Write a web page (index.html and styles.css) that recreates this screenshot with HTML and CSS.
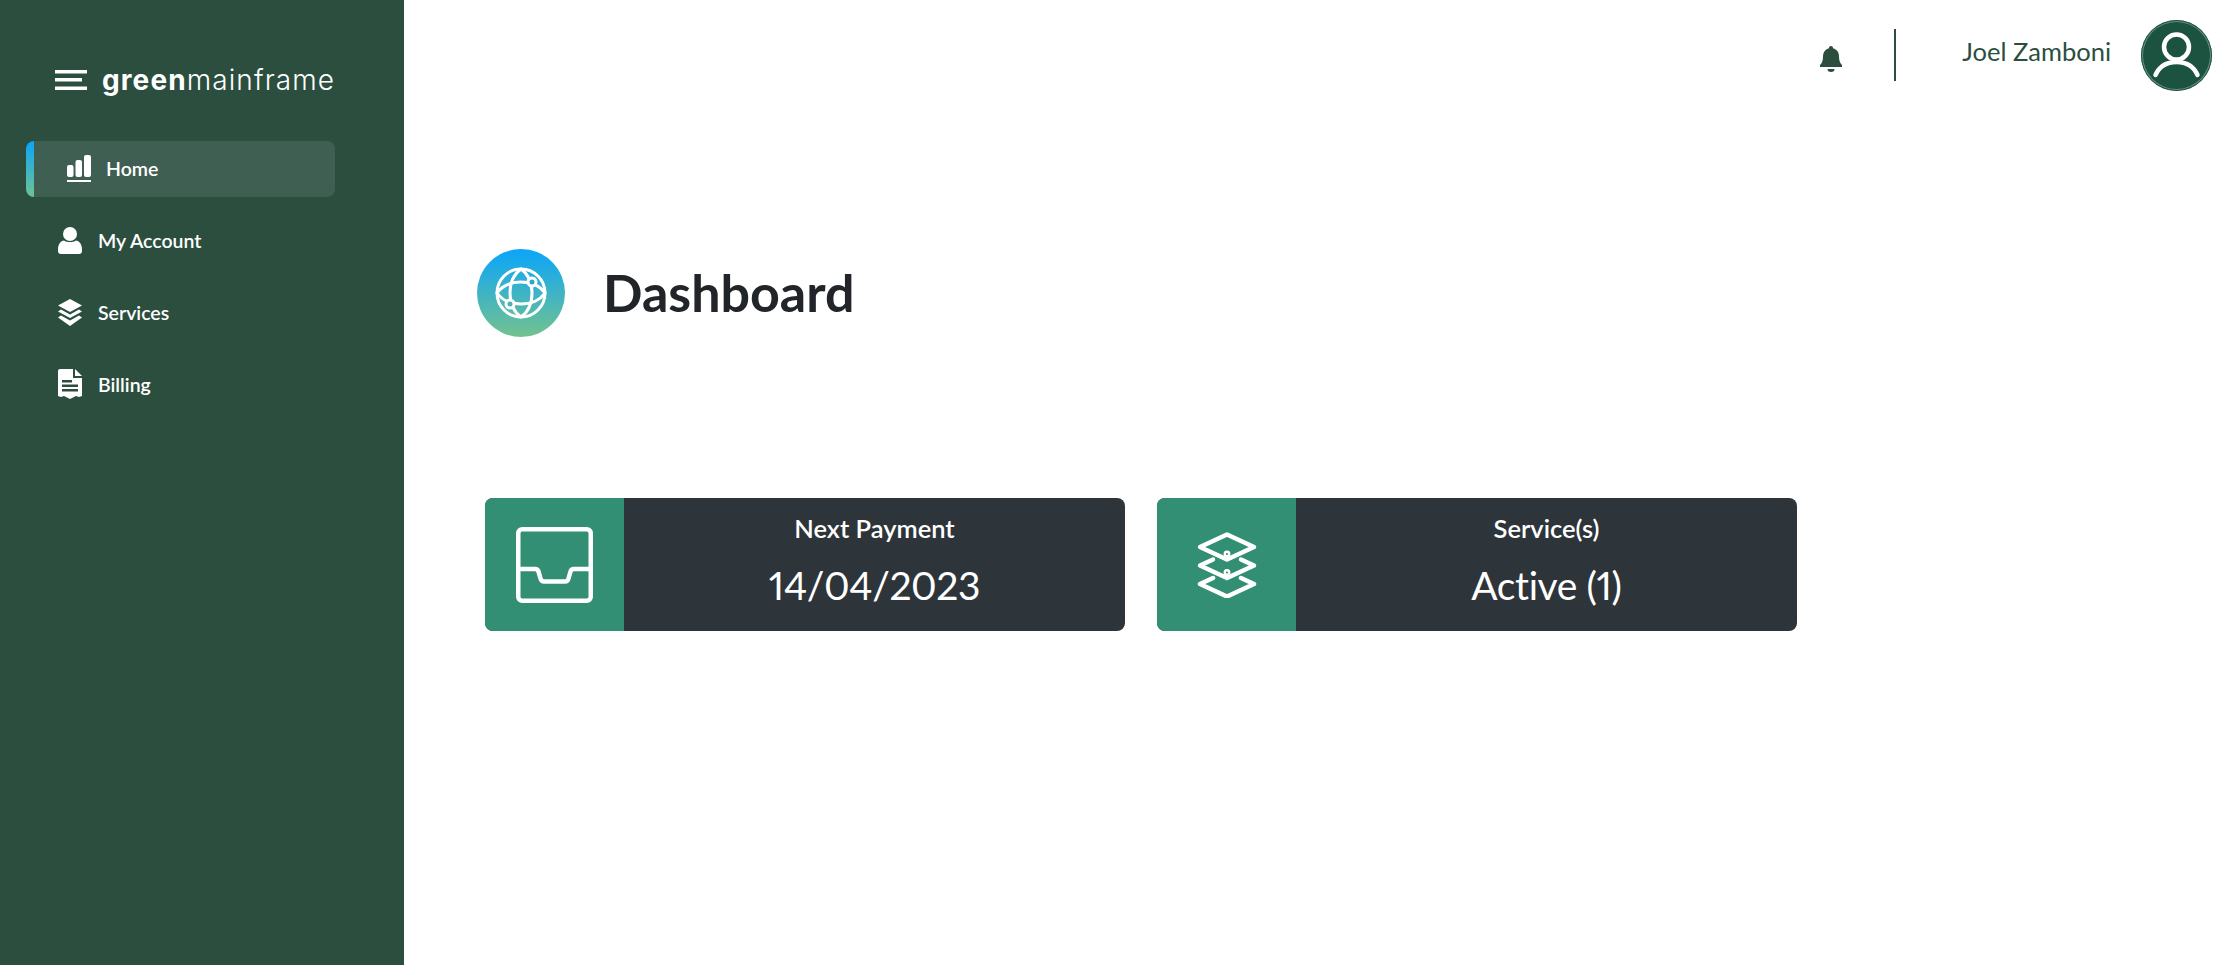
FILE: index.html
```html
<!DOCTYPE html>
<html>

<head>
    <title>greenmainframe - Dashboard</title>
    <link rel="stylesheet" href="styles.css">
</head>

<body>
    <aside class="sidebar">
        <div class="brand">
            <svg class="brand-icon" viewBox="0 0 32 20" fill="#fff">
                <rect x="0" y="0" width="32" height="3.500"></rect>
                <rect x="0" y="8" width="27" height="3.500"></rect>
                <rect x="0" y="16.500" width="32" height="3.500"></rect>
            </svg>
            <span class="brand-name"><b>green</b>mainframe</span>
        </div>

        <nav class="nav">
            <a class="nav-item active">
                <svg class="nav-icon" viewBox="0 0 24 27" fill="#fff">
                    <rect x="0" y="10" width="6.500" height="12" rx="2"></rect>
                    <rect x="8.500" y="5" width="6.500" height="17" rx="2"></rect>
                    <rect x="17" y="0" width="7" height="22" rx="2"></rect>
                    <rect x="0" y="25" width="24" height="2"></rect>
                </svg>
                <span>Home</span>
            </a>
            <a class="nav-item">
                <svg class="nav-icon" viewBox="0 0 24 27" fill="#fff">
                    <circle cx="12" cy="7" r="7"></circle>
                    <path d="M0 22c0-5 3-8 6-8.500 3 2 9 2 12 0 3 .5 6 3.500 6 8.500v2a3 3 0 0 1-3 3H3a3 3 0 0 1-3-3z"></path>
                </svg>
                <span>My Account</span>
            </a>
            <a class="nav-item">
                <svg class="nav-icon" viewBox="0 0 24 27" fill="#fff">
                    <path d="M12 0l12 6.500-12 6.500L0 6.500z"></path>
                    <path d="M3 10.500l9 5 9-5 3 2-12 6.500L0 12.500z"></path>
                    <path d="M3 16.500l9 5 9-5 3 2L12 27 0 18.500z"></path>
                </svg>
                <span>Services</span>
            </a>
            <a class="nav-item">
                <svg class="nav-icon nav-icon-tall" viewBox="0 0 24 30" fill="#fff">
                    <path d="M2 0h13v9h9v18l-3 1-3-1-3 1.500L12 30l-3-1.500L6 27l-3 1-3-1V2a2 2 0 0 1 2-2z"></path>
                    <path d="M17 0l7 7h-7z"></path>
                    <rect x="4" y="11" width="10" height="2.500" fill="#2b4e3f"></rect>
                    <rect x="4" y="15.500" width="16" height="2.500" fill="#2b4e3f"></rect>
                    <rect x="4" y="20" width="16" height="2.500" fill="#2b4e3f"></rect>
                </svg>
                <span>Billing</span>
            </a>
        </nav>
    </aside>

    <main class="main">
        <header class="topbar">
            <svg class="bell" viewBox="0 0 22 26" fill="#2b4e3f">
                <path d="M11 0a2 2 0 0 1 2 2.200c4 1 6 4.300 6 8.300 0 4 1 6.500 3 8.500v2H0v-2c2-2 3-4.500 3-8.500 0-4 2-7.300 6-8.300A2 2 0 0 1 11 0z"></path>
                <path d="M7.500 23h7a3.500 3 0 0 1-7 0z"></path>
            </svg>
            <div class="divider"></div>
            <span class="user-name">Joel Zamboni</span>
            <div class="avatar">
                <svg viewBox="0 0 71 71" fill="none" stroke="#fff" stroke-width="4.500" stroke-linecap="round">
                    <circle cx="35.500" cy="27" r="12.500"></circle>
                    <path d="M14.500 55c4-9 12-13 21-13s17 4 21 13"></path>
                </svg>
            </div>
        </header>

        <section class="page-title">
            <div class="title-icon">
                <svg viewBox="0 0 52 52" fill="none" stroke="#fff" stroke-width="3">
                    <circle cx="26" cy="26" r="24"></circle>
                    <path d="M26 2c-7 5-11 14-11 24s4 19 11 24c7-5 11-14 11-24S33 7 26 2z"></path>
                    <path d="M2 26c5-7 14-11 24-11s19 4 24 11c-5 7-14 11-24 11S7 33 2 26z"></path>
                    <circle cx="37" cy="15" r="4" fill="#2aa9cc"></circle>
                    <circle cx="15" cy="37" r="4" fill="#4fb3ad"></circle>
                </svg>
            </div>
            <h1>Dashboard</h1>
        </section>

        <section class="cards">
            <div class="card">
                <div class="card-icon">
                    <svg class="inbox" viewBox="0 0 77 76" fill="none" stroke="#fff" stroke-width="4.500" stroke-linejoin="round" stroke-linecap="round">
                        <rect x="2.250" y="2.250" width="72.500" height="71.500" rx="4"></rect>
                        <path d="M2.250 42H19c2 0 3 .8 3.500 2.500l2 7c.5 2 1.500 3 3.500 3h21c2 0 3-1 3.500-3l2-7c.5-1.700 1.500-2.500 3.500-2.500h17"></path>
                    </svg>
                </div>
                <div class="card-body">
                    <div class="card-label">Next Payment</div>
                    <div class="card-value">14/04/2023</div>
                </div>
            </div>
            <div class="card">
                <div class="card-icon">
                    <svg class="stack" viewBox="0 0 60 66" fill="none" stroke="#fff" stroke-width="4.500" stroke-linejoin="round" stroke-linecap="round">
                        <path d="M30 2.500l27 12.500-27 12.500L3 15z"></path>
                        <path d="M44 27.500l13 6-27 12.500L3 33.500l13-6"></path>
                        <path d="M44 46l13 6-27 12.500L3 52l13-6"></path>
                        <circle cx="30" cy="22" r="1.200"></circle>
                        <circle cx="30" cy="40.500" r="1.200"></circle>
                    </svg>
                </div>
                <div class="card-body">
                    <div class="card-label">Service(s)</div>
                    <div class="card-value">Active (1)</div>
                </div>
            </div>
        </section>
    </main>
</body>

</html>
```

FILE: styles.css
```css
* {
    box-sizing: border-box;
}

body {
    font-family: Lato, "Liberation Sans", sans-serif;
    margin: 0;
    display: flex;
    min-height: 965px;
    background-color: #fff;
    color: #212529;
}

.sidebar {
    width: 404px;
    flex-shrink: 0;
    background-color: #2b4e3f;
    padding: 62px 0 0 26px;
}

.brand {
    display: flex;
    align-items: center;
    gap: 15px;
    padding-left: 29px;
    height: 36px;
    color: #fff;
}

.brand-icon {
    width: 32px;
    height: 20px;
}

.brand-name {
    font-family: Inter, "Noto Sans", sans-serif;
    font-size: 28px;
    font-weight: 300;
    letter-spacing: 1.100px;
}

.brand-name b {
    font-weight: 700;
}

.nav {
    margin-top: 43px;
    display: flex;
    flex-direction: column;
    gap: 16px;
}

.nav-item {
    display: flex;
    align-items: center;
    height: 56px;
    width: 309px;
    padding-left: 32px;
    padding-bottom: 2px;
    gap: 16px;
    color: #fff;
    font-size: 19.500px;
    font-weight: 600;
}

.nav-item.active {
    padding-left: 41px;
    gap: 15px;
    border-radius: 8px;
    background: linear-gradient(#0aa5fb, #6fc392) left / 8px 100% no-repeat, #3f5f52;
}

.nav-icon {
    width: 24px;
    height: 27px;
}

.nav-icon-tall {
    height: 30px;
}

.main {
    flex: 1;
    padding: 0 0 0 73px;
}

.topbar {
    display: flex;
    align-items: center;
    height: 110px;
    padding-right: 14px;
}

.bell {
    width: 22px;
    height: 26px;
    margin-left: auto;
    margin-top: 7px;
}

.divider {
    width: 2px;
    height: 52px;
    background-color: #2b4e3f;
    margin: 0 66px 0 52px;
}

.user-name {
    font-size: 25.500px;
    color: #2b4e3f;
    margin-top: -8px;
}

.avatar {
    width: 71px;
    height: 71px;
    margin-left: 30px;
    border-radius: 50%;
    background-color: #1b5240;
    box-shadow: inset 0 0 0 1px #1b5240, inset 0 0 0 2px rgba(255, 255, 255, 0.35);
}

.avatar svg {
    display: block;
}

.page-title {
    display: flex;
    align-items: center;
    gap: 38px;
    margin-top: 139px;
}

.title-icon {
    width: 88px;
    height: 88px;
    border-radius: 50%;
    background: linear-gradient(#0aa5fb, #73c28f);
    display: flex;
    align-items: center;
    justify-content: center;
}

.title-icon svg {
    width: 52px;
    height: 52px;
}

h1 {
    margin: 0;
    padding-bottom: 2px;
    font-size: 52px;
    font-weight: 700;
}

.cards {
    display: flex;
    gap: 32px;
    margin: 161px 0 0 8px;
}

.card {
    display: flex;
    width: 640px;
    height: 133px;
    border-radius: 8px;
    overflow: hidden;
    background-color: #2e353a;
    color: #fff;
}

.card-icon {
    width: 139px;
    flex-shrink: 0;
    background-color: #328f73;
    display: flex;
    align-items: center;
    justify-content: center;
}

.inbox {
    width: 77px;
    height: 76px;
}

.stack {
    width: 60px;
    height: 66px;
}

.card-body {
    flex: 1;
    text-align: center;
}

.card-label {
    font-size: 25.500px;
    font-weight: 600;
    margin-top: 15px;
}

.card-value {
    font-size: 39px;
    font-variant-numeric: proportional-nums;
    letter-spacing: -0.400px;
    margin-top: 19px;
}
```
